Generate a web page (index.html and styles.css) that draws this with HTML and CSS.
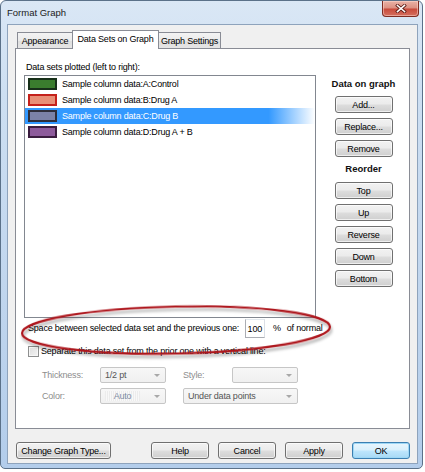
FILE: index.html
```html
<!DOCTYPE html>
<html>
<head>
<meta charset="utf-8">
<title>Format Graph</title>
<link rel="stylesheet" href="styles.css">
</head>
<body>
<div class="window">
  <div class="titlebar">
    <span class="title">Format Graph</span>
    <div class="close">
      <svg width="12" height="9" viewBox="0 0 12 9"><path d="M2.5 1.5 L9.5 7.5 M9.5 1.5 L2.5 7.5" stroke="#5a1a14" stroke-width="3.2" stroke-linecap="square"/><path d="M2.5 1.5 L9.5 7.5 M9.5 1.5 L2.5 7.5" stroke="#ffffff" stroke-width="1.6" stroke-linecap="square"/></svg>
    </div>
  </div>
  <div class="client">
    <div class="tabs">
      <div class="tab t1">Appearance</div>
      <div class="tab t2 active">Data Sets on Graph</div>
      <div class="tab t3">Graph Settings</div>
    </div>
    <div class="panel">
      <div class="main">
        <div class="left">
          <div class="label">Data sets plotted (left to right):</div>
          <div class="list">
            <div class="row"><span class="sw sw-a"></span>Sample column data:A:Control</div>
            <div class="row"><span class="sw sw-b"></span>Sample column data:B:Drug A</div>
            <div class="row selected"><span class="sw sw-c"></span>Sample column data:C:Drug B</div>
            <div class="row"><span class="sw sw-d"></span>Sample column data:D:Drug A + B</div>
          </div>
        </div>
        <div class="right">
          <div class="head">Data on graph</div>
          <div class="btn">Add...</div>
          <div class="btn">Replace...</div>
          <div class="btn">Remove</div>
          <div class="head head2">Reorder</div>
          <div class="btn">Top</div>
          <div class="btn">Up</div>
          <div class="btn">Reverse</div>
          <div class="btn">Down</div>
          <div class="btn">Bottom</div>
        </div>
      </div>
      <div class="space-row">
        <span class="space-label">Space between selected data set and the previous one:</span>
        <span class="num">100</span>
        <span class="pct">%</span>
        <span>of normal</span>
      </div>
      <div class="check-row">
        <span class="checkbox"></span>
        <span>Separate this data set from the prior one with a vertical line:</span>
      </div>
      <div class="line-grid">
        <span class="dlabel">Thickness:</span>
        <span class="select"><span class="sel-text">1/2 pt</span><span class="arrow"></span></span>
        <span></span>
        <span class="dlabel">Style:</span>
        <span class="select"><span class="sel-text"></span><span class="arrow"></span></span>
        <span class="dlabel">Color:</span>
        <span class="select color-sel"><span class="sel-text auto">Auto</span><span class="arrow"></span></span>
        <span></span>
        <span class="select wide"><span class="sel-text">Under data points</span><span class="arrow"></span></span>
      </div>
    </div>
    <div class="footer">
      <div class="btn fbtn change">Change Graph Type...</div>
      <div class="fright">
        <div class="btn fbtn">Help</div>
        <div class="btn fbtn">Cancel</div>
        <div class="btn fbtn">Apply</div>
        <div class="btn fbtn default">OK</div>
      </div>
    </div>
  </div>
</div>
<svg class="annot" width="425" height="472" viewBox="0 0 425 472">
  <defs>
    <filter id="sh" x="-10%" y="-50%" width="120%" height="200%">
      <feDropShadow dx="1" dy="3" stdDeviation="1.8" flood-color="#000" flood-opacity="0.35"/>
    </filter>
  </defs>
  <ellipse cx="176" cy="330" rx="154" ry="23.5" transform="rotate(-1.2 176 330)" fill="none" stroke="#ad141b" stroke-width="2.2" filter="url(#sh)"/>
</svg>
</body>
</html>
```

FILE: styles.css
```css
* { box-sizing: border-box; }
html, body { margin: 0; padding: 0; background: #ffffff; }
body {
  position: relative;
  width: 425px;
  height: 472px;
  overflow: hidden;
  font-family: "Liberation Sans", Arial, sans-serif;
  font-size: 9px;
  letter-spacing: -0.2px;
  color: #000;
}

.window {
  width: 423px;
  height: 469px;
  border: 1px solid #5b7189;
  border-radius: 6px 6px 5px 5px;
  background: linear-gradient(to bottom, #dae7f5 0%, #cddff2 20%, #c1d6ee 60%, #b3cdeb 100%);
  padding: 0 4px 4px 6px;
  display: flex;
  flex-direction: column;
}

.titlebar {
  height: 23px;
  display: flex;
  align-items: flex-start;
}
.title {
  font-size: 9.5px;
  letter-spacing: 0;
  color: #1b1b1b;
  margin-top: 6px;
}
.close {
  margin-left: auto;
  margin-right: -1px;
  width: 37px;
  height: 16px;
  border: 1px solid #7e2c22;
  border-top: none;
  border-radius: 0 0 4px 4px;
  background: linear-gradient(to bottom, #e9b2a6 0%, #dc8f81 48%, #c8493a 52%, #d4705f 100%);
  box-shadow: inset 0 0 0 1px rgba(255, 220, 210, 0.5);
  display: flex;
  align-items: center;
  justify-content: center;
}

.client {
  flex: 1;
  border: 1px solid #8ea3bc;
  background: #f0f0f0;
  padding-top: 5px;
  display: flex;
  flex-direction: column;
}

.tabs {
  display: flex;
  align-items: flex-end;
  height: 19px;
  padding-left: 9px;
  margin-bottom: -1px;
  position: relative;
  z-index: 1;
}
.tab {
  height: 16px;
  margin-bottom: 1px;
  border: 1px solid #898c95;
  border-bottom: none;
  background: linear-gradient(to bottom, #f3f3f3 0%, #ebebeb 50%, #dedede 51%, #e5e5e5 100%);
  display: flex;
  align-items: center;
  justify-content: center;
  color: #000;
}
.tab.t1 { width: 55px; border-right: none; }
.tab.t2 { width: 87px; }
.tab.t3 { width: 62px; border-left: none; }
.tab.active {
  height: 19px;
  margin-bottom: 0;
  background: #ffffff;
  padding-bottom: 2px;
}

.panel {
  height: 381px;
  margin: 0 7px 0 7px;
  border: 1px solid #898c95;
  background: #ffffff;
}

.main {
  display: flex;
  padding: 13px 0 0 8px;
}
.left { width: 292px; }
.label {
  height: 13px;
  line-height: 11px;
  padding-left: 2px;
}
.list {
  height: 243px;
  border: 1px solid #828790;
  background: #fff;
}
.row {
  height: 16px;
  display: flex;
  align-items: center;
  padding-left: 3px;
  white-space: nowrap;
}
.row.selected {
  color: #fff;
  background: linear-gradient(to right, #3399ff 0%, #3399ff 84%, #ffffff 100%);
}
.sw {
  width: 29px;
  height: 12px;
  border: 2px solid #222;
  margin-right: 5px;
  flex: none;
}
.sw-a { background: #3a7d2e; border-color: #17301a; }
.sw-b { background: #e88f77; border-color: #c5211b; }
.sw-c { background: #7b82a8; border-color: #2e2e3a; }
.sw-d { background: #8d5a9b; border-color: #3a1c3f; }

.right {
  flex: 1;
  display: flex;
  flex-direction: column;
  align-items: center;
  padding-top: 15px;
  padding-left: 2px;
}
.head {
  font-weight: bold;
  font-size: 9.5px;
  letter-spacing: 0;
  height: 14px;
  line-height: 14px;
  color: #111;
  margin-bottom: 5px;
}
.head2 { margin-top: 5px; margin-bottom: 6px; }

.btn {
  width: 58px;
  height: 17px;
  border: 1px solid #707070;
  border-radius: 3px;
  background: linear-gradient(to bottom, #f2f2f2 0%, #ebebeb 48%, #dddddd 52%, #cfcfcf 100%);
  box-shadow: inset 0 0 0 1px rgba(255, 255, 255, 0.65);
  display: flex;
  align-items: center;
  justify-content: center;
  color: #000;
  white-space: nowrap;
}
.right .btn + .btn { margin-top: 5px; }

.space-row {
  height: 20px;
  display: flex;
  align-items: center;
  padding-left: 12px;
}
.space-label { width: 217px; white-space: nowrap; }
.num {
  width: 20px;
  height: 19px;
  border: 1px solid #abadb3;
  border-top-color: #e3e9ef;
  border-right-color: #dbdfe6;
  display: flex;
  align-items: center;
  justify-content: flex-end;
  padding-right: 2px;
  margin-top: 1px;
}
.pct { margin-left: 8px; margin-right: 6px; }

.check-row {
  height: 18px;
  margin-top: 4px;
  display: flex;
  align-items: center;
  padding-left: 12px;
  white-space: nowrap;
}
.checkbox {
  width: 11px;
  height: 11px;
  border: 1px solid #8e8f8f;
  background: linear-gradient(135deg, #dcdcdc 0%, #f4f4f4 100%);
  box-shadow: inset 0 0 0 1px #f6f6f6;
  margin-right: 2px;
  flex: none;
}

.line-grid {
  display: grid;
  grid-template-columns: 58px 66px 17px 49px 66px;
  grid-auto-rows: 16px;
  row-gap: 5px;
  margin-top: 7px;
  padding-left: 26px;
  align-items: center;
}
.dlabel { color: #8d8d8d; }
.select {
  height: 16px;
  border: 1px solid #c6c6c6;
  border-radius: 2px;
  background: linear-gradient(to bottom, #f7f7f7 0%, #f0f0f0 100%);
  display: flex;
  align-items: center;
  padding-left: 4px;
  position: relative;
}
.select.wide { grid-column: 4 / 6; }
.sel-text { flex: 1; color: #555; white-space: nowrap; }
.sel-text.auto {
  text-align: center;
  color: #7d8ba3;
  margin-right: 14px;
  background: repeating-linear-gradient(90deg, #ececec 0 1px, #f8f8f8 1px 2px);
}
.arrow {
  width: 0;
  height: 0;
  border-left: 3px solid transparent;
  border-right: 3px solid transparent;
  border-top: 3px solid #a8a8a8;
  margin-right: 5px;
}

.footer {
  display: flex;
  margin-top: 13px;
  padding: 0 7px 0 8px;
}
.fbtn { height: 17px; }
.change { width: 95px; }
.fright { margin-left: auto; display: flex; gap: 9px; }
.btn.default {
  border-color: #3c7fb1;
  box-shadow: inset 0 0 0 1px #9ed8f6;
  background: linear-gradient(to bottom, #eaf6fd 0%, #d9f0fc 48%, #bee6fd 52%, #a7d9f5 100%);
}

.annot {
  position: absolute;
  left: 0;
  top: 0;
  pointer-events: none;
}
```
